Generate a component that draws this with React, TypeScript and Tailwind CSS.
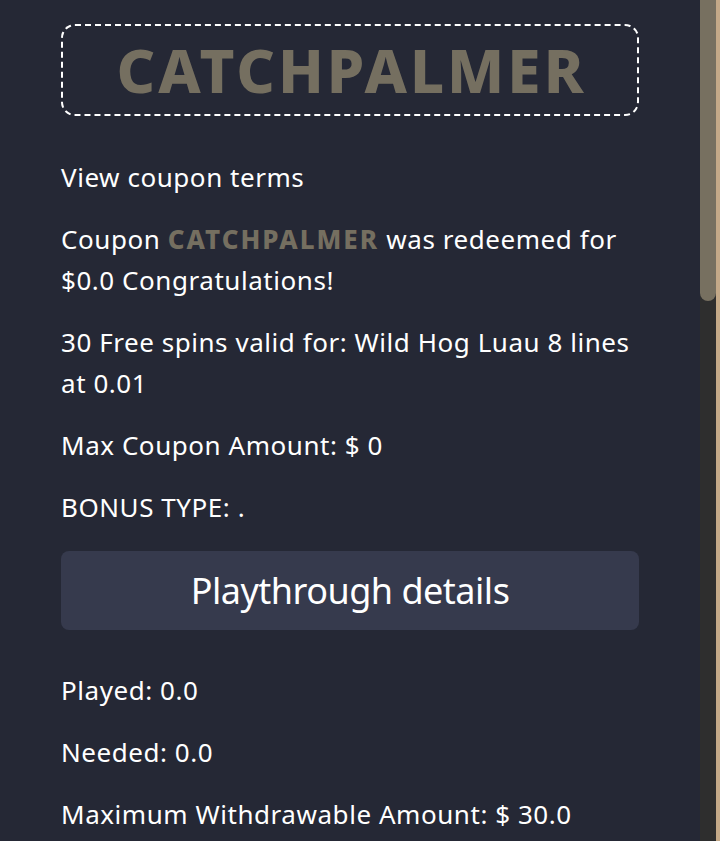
import React from "react";

export default function App() {
  const p = "m-0 text-[26px] leading-[41px] tracking-[0.55px] text-white";
  return (
    <div className="flex w-[720px] h-[841px] overflow-hidden bg-[#252835]" style={{ fontFamily: "'Noto Sans', sans-serif" }}>
      <div className="flex-1 pl-[61px] pr-[61px] pt-[24px]">
        <div className="h-[92px] rounded-[14px] border-2 border-dashed border-white flex items-center justify-center">
          <span className="text-[60px] font-extrabold text-[#756f60] tracking-[3px] pl-[3px]">CATCHPALMER</span>
        </div>
        <div className="mt-[41px] flex flex-col gap-[21px]">
          <p className={p}>View coupon terms</p>
          <p className={p}>
            Coupon <span className="font-extrabold text-[#756f60] tracking-[2px]">CATCHPALMER</span> was redeemed for
            <br />
            $0.0 Congratulations!
          </p>
          <p className={p}>
            30 Free spins valid for: Wild Hog Luau 8 lines
            <br />
            at 0.01
          </p>
          <p className={p}>Max Coupon Amount: $ 0</p>
          <p className={p}>BONUS TYPE: .</p>
        </div>
        <div className="mt-[23px] h-[79px] rounded-[8px] bg-[#363a4d] flex items-center justify-center">
          <span className="text-[36px] tracking-[-0.5px] text-white">Playthrough details</span>
        </div>
        <div className="mt-[40px] flex flex-col gap-[21px]">
          <p className={p}>Played: 0.0</p>
          <p className={p}>Needed: 0.0</p>
          <p className={p}>Maximum Withdrawable Amount: $ 30.0</p>
        </div>
      </div>
      <div className="w-[16px] bg-[#2e2e2e] flex flex-col">
        <div className="h-[301px] w-[16px] bg-[#777060] rounded-b-full" />
      </div>
      <div className="w-[4px] bg-[#c4a988]" />
    </div>
  );
}
